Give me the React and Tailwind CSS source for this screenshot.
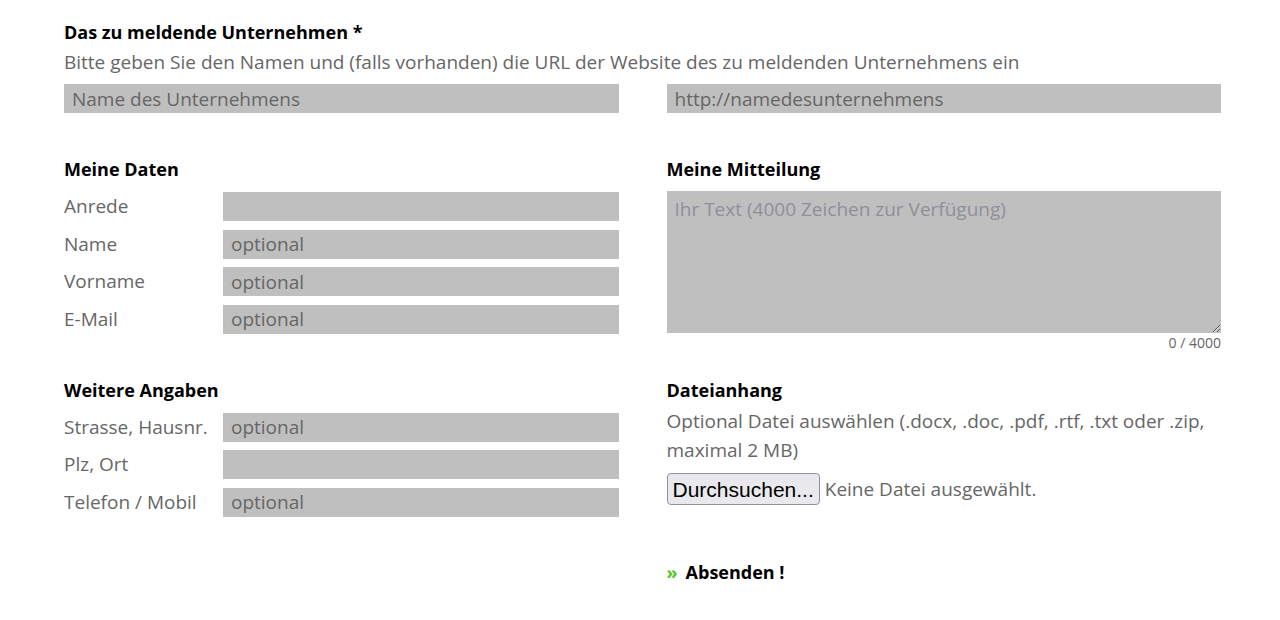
import React from "react";

const Field = ({ placeholder = "", className = "" }) => (
  <input
    type="text"
    placeholder={placeholder}
    className={`h-[29px] w-full bg-[#bfbfbf] px-2 text-[19px] text-[#333] placeholder:text-[#666] outline-none ${className}`}
  />
);

const Row = ({ label, placeholder }) => (
  <div className="flex items-center">
    <label className="w-[159px] shrink-0 text-[19px] leading-[29px] text-[#666]">{label}</label>
    <Field placeholder={placeholder} />
  </div>
);

const SectionTitle = ({ children, className = "" }) => (
  <h3 className={`text-[18px] font-bold leading-[28px] text-black ${className}`}>{children}</h3>
);

export default function App() {
  return (
    <div className="min-h-[620px] bg-white font-['Open_Sans','Lato',sans-serif]">
      <form className="ml-[64px] w-[1157px] pt-[18px]">
        {/* Unternehmen */}
        <SectionTitle>Das zu meldende Unternehmen *</SectionTitle>
        <p className="mt-[2px] text-[19px] leading-[28px] text-[#666]">
          Bitte geben Sie den Namen und (falls vorhanden) die URL der Website des zu meldenden Unternehmens ein
        </p>
        <div className="mt-[8px] grid grid-cols-2 gap-[48px]">
          <Field placeholder="Name des Unternehmens" />
          <Field placeholder="http://namedesunternehmens" />
        </div>

        <div className="grid grid-cols-2 gap-[48px]">
          {/* left column */}
          <div className="flex flex-col">
            <SectionTitle className="mt-[42px]">Meine Daten</SectionTitle>
            <div className="mt-[9px] flex flex-col gap-[8.5px]">
              <Row label="Anrede" />
              <Row label="Name" placeholder="optional" />
              <Row label="Vorname" placeholder="optional" />
              <Row label="E-Mail" placeholder="optional" />
            </div>

            <SectionTitle className="mt-[42px]">Weitere Angaben</SectionTitle>
            <div className="mt-[9px] flex flex-col gap-[8.5px]">
              <Row label="Strasse, Hausnr." placeholder="optional" />
              <Row label="Plz, Ort" />
              <Row label="Telefon / Mobil" placeholder="optional" />
            </div>
          </div>

          {/* right column */}
          <div className="flex flex-col">
            <SectionTitle className="mt-[42px]">Meine Mitteilung</SectionTitle>
            <textarea
              placeholder="Ihr Text (4000 Zeichen zur Verfügung)"
              maxLength={4000}
              className="mt-[8px] h-[142px] w-full bg-[#bfbfbf] px-2 py-[4px] text-[19px] leading-[28px] text-[#333] placeholder:text-[#8f8f9a] outline-none"
            />
            <div className="mt-[2px] text-right text-[14px] leading-[16px] text-[#666]">0 / 4000</div>

            <SectionTitle className="mt-[25px]">Dateianhang</SectionTitle>
            <p className="mt-[3px] text-[19px] leading-[29px] text-[#666]">
              Optional Datei auswählen (.docx, .doc, .pdf, .rtf, .txt oder .zip, maximal 2 MB)
            </p>
            <div className="mt-[8px] flex items-center gap-[5px]">
              <button
                type="button"
                className="h-[32px] rounded-[4px] border border-[#8f8f9d] bg-[#e9e9ed] px-[5px] font-['Liberation_Sans',Arial,sans-serif] text-[21px] text-black"
              >
                Durchsuchen...
              </button>
              <span className="text-[19px] text-[#666]">Keine Datei ausgewählt.</span>
            </div>

            <button type="button" className="mt-[53px] flex items-center gap-[8px] self-start text-[18px] font-bold leading-[28px] text-black">
              <span className="text-[#55c523]">»</span>
              Absenden !
            </button>
          </div>
        </div>
      </form>
    </div>
  );
}
